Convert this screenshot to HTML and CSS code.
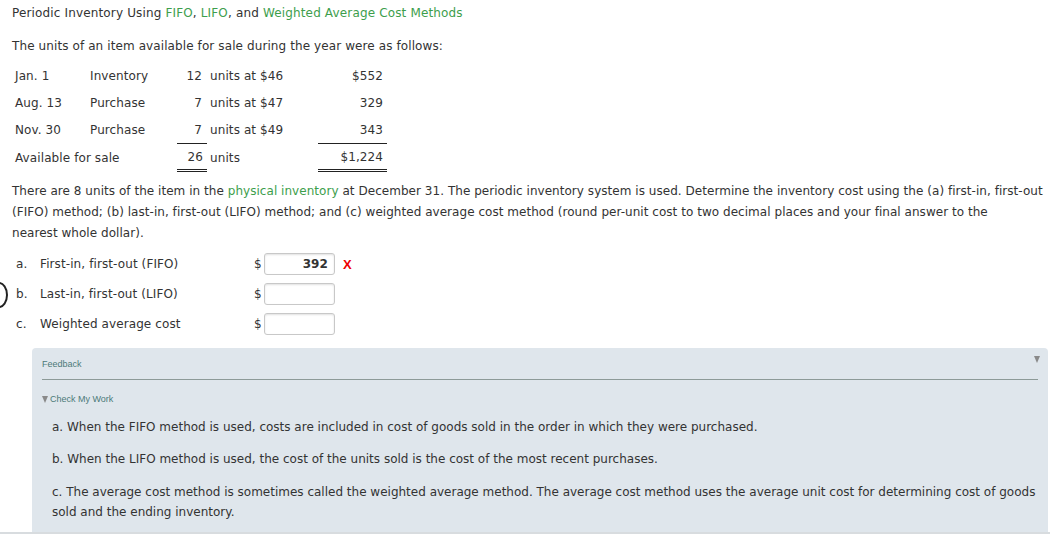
FILE: index.html
```html
<!DOCTYPE html>
<html>
<head>
<meta charset="utf-8">
<link rel="stylesheet" href="styles.css">
</head>
<body>
<div class="page">
  <h1 class="title">Periodic Inventory Using <span class="g">FIFO</span>, <span class="g">LIFO</span>, and <span class="g">Weighted Average Cost Methods</span></h1>
  <p class="intro">The units of an item available for sale during the year were as follows:</p>
  <div class="tbl">
    <div class="row">
      <span class="c-date">Jan. 1</span><span class="c-desc">Inventory</span><span class="c-num">12</span><span class="c-unit">units at $46</span><span class="c-amt">$552</span>
    </div>
    <div class="row">
      <span class="c-date">Aug. 13</span><span class="c-desc">Purchase</span><span class="c-num">7</span><span class="c-unit">units at $47</span><span class="c-amt">329</span>
    </div>
    <div class="row">
      <span class="c-date">Nov. 30</span><span class="c-desc">Purchase</span><span class="c-num">7</span><span class="c-unit">units at $49</span><span class="c-amt">343</span>
    </div>
    <div class="row total">
      <span class="c-label">Available for sale</span><span class="c-num">26</span><span class="c-unit">units</span><span class="c-amt">$1,224</span>
    </div>
  </div>
  <p class="para">There are 8 units of the item in the <span class="g">physical inventory</span> at December 31. The periodic inventory system is used. Determine the inventory cost using the (a) first-in, first-out (FIFO) method; (b) last-in, first-out (LIFO) method; and (c) weighted average cost method (round per-unit cost to two decimal places and your final answer to the <span class="nw">nearest whole dollar).</span></p>
  <div class="qs">
    <span class="edge"></span>
    <div class="q">
      <span class="q-l">a.</span><span class="q-t">First-in, first-out (FIFO)</span><span class="q-d">$</span><span class="inp filled">392</span><span class="x">X</span>
    </div>
    <div class="q">
      <span class="q-l">b.</span><span class="q-t">Last-in, first-out (LIFO)</span><span class="q-d">$</span><span class="inp"></span>
    </div>
    <div class="q">
      <span class="q-l">c.</span><span class="q-t">Weighted average cost</span><span class="q-d">$</span><span class="inp"></span>
    </div>
  </div>
  <div class="fb">
    <div class="fb-head"><span>Feedback</span><span class="tri"></span></div>
    <div class="cmw"><span class="tri small"></span>Check My Work</div>
    <p class="fb-p">a. When the FIFO method is used, costs are included in cost of goods sold in the order in which they were purchased.</p>
    <p class="fb-p">b. When the LIFO method is used, the cost of the units sold is the cost of the most recent purchases.</p>
    <p class="fb-p">c. The average cost method is sometimes called the weighted average method. The average cost method uses the average unit cost for determining cost of goods sold and the ending inventory.</p>
  </div>
</div>
<div class="bottombar"></div>
</body>
</html>
```

FILE: styles.css
```css
html, body {
  margin: 0;
  padding: 0;
  background: #fff;
  overflow: hidden;
  height: 534px;
}
body {
  font-family: "DejaVu Sans", Verdana, sans-serif;
  font-size: 12px;
  letter-spacing: 0.1px;
  color: #333;
  position: relative;
}
.page {
  padding: 5px 0 0 12px;
}
.g { color: #3d9e4c; }
.nw { white-space: nowrap; }
.title {
  font-size: 12px;
  font-weight: normal;
  margin: 0;
  line-height: 16px;
  letter-spacing: 0.15px;
}
.intro {
  margin: 17px 0 0 0;
  line-height: 16px;
}
.tbl {
  margin-top: 8px;
  padding-left: 3px;
}
.row {
  display: flex;
  align-items: center;
  height: 27px;
}
.c-date { width: 75px; }
.c-desc { width: 80px; }
.c-label { width: 155px; }
.c-num {
  width: 35px;
  text-align: right;
  box-sizing: border-box;
  padding-right: 3px;
}
.c-unit {
  width: 113px;
  padding-left: 5px;
  box-sizing: border-box;
}
.c-amt {
  width: 69px;
  text-align: right;
  box-sizing: border-box;
  padding-right: 4px;
}
.row.total { height: 29px; }
.row.total .c-num, .row.total .c-amt {
  align-self: stretch;
  display: flex;
  align-items: center;
  justify-content: flex-end;
  border-top: 1px solid #222;
  border-bottom: 3px double #222;
}
.row.total .c-num {
  width: 30px;
  margin-left: 7px;
  padding-right: 4px;
}
.row.total .c-unit {
  width: 111px;
  padding-left: 3px;
}
.para {
  margin: 9px 0 0 0;
  line-height: 21px;
  width: 1042px;
  letter-spacing: 0.04px;
}
.qs {
  margin-top: 5px;
  position: relative;
  padding-left: 4px;
}
.edge {
  position: absolute;
  left: -22px;
  top: 33px;
  width: 14px;
  height: 22px;
  border: 2px solid #222;
  border-radius: 50%;
}
.q {
  display: flex;
  align-items: center;
  height: 30px;
}
.q-l { width: 24px; }
.q-t { width: 214px; }
.q-d { width: 10px; }
.inp {
  width: 71px;
  height: 22px;
  box-sizing: border-box;
  border: 1px solid #c8c8c8;
  border-radius: 3px;
  box-shadow: inset 0 1px 2px rgba(0,0,0,0.12);
  background: #fff;
  text-align: right;
  padding-right: 6px;
  line-height: 20px;
  font-weight: bold;
  color: #333;
}
.x {
  color: #e00;
  font-weight: bold;
  margin-left: 8px;
  font-size: 13px;
  font-family: "Liberation Sans", Arial, sans-serif;
}
.fb {
  margin: 9px 0 0 20px;
  width: 1016px;
  background: #dfe6ec;
  border-radius: 4px 4px 0 0;
  padding: 0 10px;
  box-sizing: border-box;
  height: 200px;
}
.fb-head {
  display: flex;
  justify-content: space-between;
  align-items: center;
  font-family: "Liberation Sans", Arial, sans-serif;
  font-size: 9px;
  letter-spacing: 0;
  color: #4c7a78;
  height: 32px;
  border-bottom: 1px solid #8d9a98;
  box-sizing: border-box;
}
.tri {
  width: 0;
  height: 0;
  border-left: 3px solid transparent;
  border-right: 3px solid transparent;
  border-top: 7px solid #8a8a8a;
  margin-right: -2px;
  margin-top: -8px;
}
.tri.small {
  display: inline-block;
  margin: 0 2px 0 0;
  border-top-width: 7px;
  vertical-align: -1px;
}
.cmw {
  font-family: "Liberation Sans", Arial, sans-serif;
  font-size: 9px;
  letter-spacing: 0;
  color: #4c7a78;
  margin-top: 13px;
  line-height: 12px;
}
.fb-p {
  margin: 12px -2px 0 10px;
  line-height: 20px;
  letter-spacing: 0;
  color: #333;
}
.fb-p + .fb-p { margin-top: 12px; }
.fb-p + .fb-p + .fb-p { margin-top: 13px; }
.bottombar {
  position: absolute;
  left: 0;
  right: 0;
  bottom: 0;
  height: 2px;
  background: #d8dcdf;
}
```
